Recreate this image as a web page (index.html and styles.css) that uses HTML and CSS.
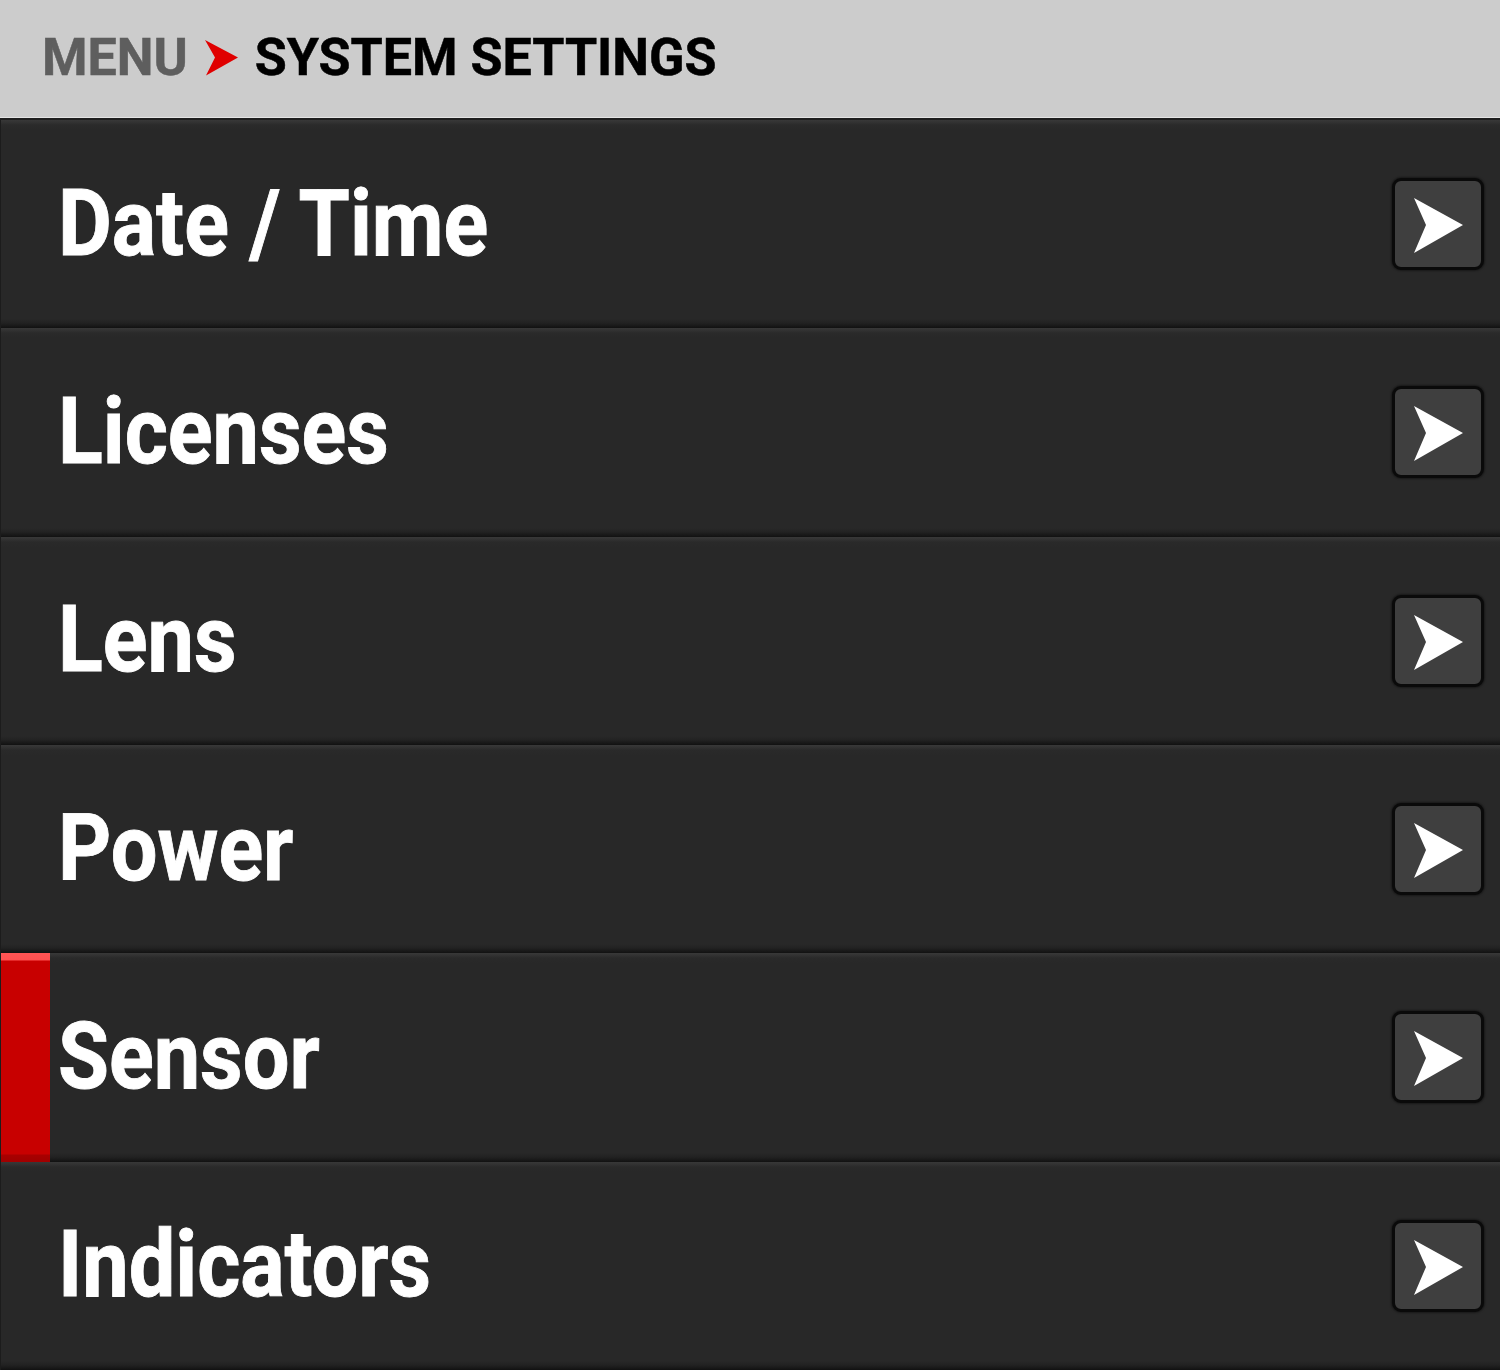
FILE: index.html
```html
<!DOCTYPE html>
<html>
<head>
<meta charset="utf-8">
<link rel="stylesheet" href="styles.css">
</head>
<body>
<div class="screen">
  <header class="header">
    <span class="crumb">MENU</span>
    <svg class="crumb-arrow" width="34" height="38" viewBox="0 0 34 38"><polygon points="0,0 33,17.5 1,35.5 10,17.5" fill="#e00000"/></svg>
    <span class="title">SYSTEM SETTINGS</span>
  </header>
  <div class="list">
    <div class="row"><div class="marker"></div><span class="label">Date / Time</span><div class="btn"><svg width="86" height="86" viewBox="0 0 86 86"><polygon points="19,17 68,44 19,72 31,44" fill="#fff"/></svg></div></div>
    <div class="row"><div class="marker"></div><span class="label">Licenses</span><div class="btn"><svg width="86" height="86" viewBox="0 0 86 86"><polygon points="19,17 68,44 19,72 31,44" fill="#fff"/></svg></div></div>
    <div class="row"><div class="marker"></div><span class="label">Lens</span><div class="btn"><svg width="86" height="86" viewBox="0 0 86 86"><polygon points="19,17 68,44 19,72 31,44" fill="#fff"/></svg></div></div>
    <div class="row"><div class="marker"></div><span class="label">Power</span><div class="btn"><svg width="86" height="86" viewBox="0 0 86 86"><polygon points="19,17 68,44 19,72 31,44" fill="#fff"/></svg></div></div>
    <div class="row selected"><div class="marker"></div><span class="label">Sensor</span><div class="btn"><svg width="86" height="86" viewBox="0 0 86 86"><polygon points="19,17 68,44 19,72 31,44" fill="#fff"/></svg></div></div>
    <div class="row"><div class="marker"></div><span class="label">Indicators</span><div class="btn"><svg width="86" height="86" viewBox="0 0 86 86"><polygon points="19,17 68,44 19,72 31,44" fill="#fff"/></svg></div></div>
  </div>
</div>
</body>
</html>
```
FILE: styles.css
```css
html, body {
  margin: 0;
  padding: 0;
  background: #282828;
}
.screen {
  width: 1500px;
  height: 1370px;
  display: flex;
  flex-direction: column;
  font-family: Roboto, "Liberation Sans", sans-serif;
  overflow: hidden;
}
.header {
  height: 117px;
  flex: none;
  background: #cccccc;
  border-bottom: 1px solid #e4e4e4;
  display: flex;
  align-items: center;
  padding-left: 42px;
  box-sizing: content-box;
  position: relative;
}
.header::after {
  content: "";
  position: absolute;
  left: 0;
  right: 0;
  bottom: -3px;
  height: 2px;
  background: #1e1e1e;
}
.crumb {
  font-weight: 700;
  font-size: 52px;
  color: #5e5e5e;
  line-height: 1;
  margin-top: -2px;
  -webkit-text-stroke: 0.5px #5e5e5e;
}
.crumb-arrow {
  margin-left: 17px;
  margin-right: 16px;
  margin-top: 1px;
}
.title {
  font-weight: 700;
  font-size: 52px;
  color: #000;
  line-height: 1;
  margin-top: -2px;
  -webkit-text-stroke: 0.5px #000;
}
.list {
  flex: 1;
  display: flex;
  flex-direction: column;
  margin-top: 2px;
}
.row {
  flex: 1;
  display: flex;
  align-items: center;
  border-left: 1px solid #1c1c1c;
  background: linear-gradient(to bottom,
    #383838 0,
    #333333 2px,
    #2a2a2a 5px,
    #282828 10px,
    #282828 calc(100% - 9px),
    #222222 calc(100% - 5px),
    #151515 calc(100% - 1px),
    #111111 100%);
}
.marker {
  width: 49px;
  align-self: stretch;
  flex: none;
}
.selected .marker {
  background: linear-gradient(to bottom,
    #ff5555 0,
    #ff5050 7px,
    #c80000 8px,
    #c80000 calc(100% - 8px),
    #a80000 calc(100% - 7px),
    #a00000 100%);
}
.label {
  margin-left: 8px;
  font-weight: 700;
  font-size: 92px;
  color: #ffffff;
  flex: 1;
  white-space: nowrap;
  margin-top: -2px;
  transform: scaleX(0.9);
  transform-origin: left center;
  -webkit-text-stroke: 0.9px #ffffff;
}
.btn {
  width: 86px;
  height: 86px;
  flex: none;
  margin-right: 16px;
  border: 3px solid #0a0a0a;
  border-radius: 9px;
  background: #3f3f3f;
  box-shadow: 0 0 2px 1px rgba(0, 0, 0, 0.4);
  display: flex;
}
```
